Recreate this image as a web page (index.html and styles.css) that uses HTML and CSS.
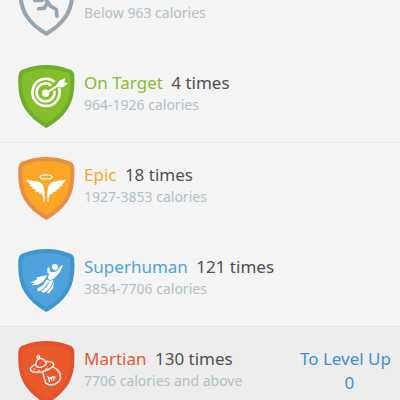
FILE: index.html
```html
<!DOCTYPE html>
<html lang="en">

<head>
    <meta charset="UTF-8">
    <meta name="viewport" content="width=device-width, initial-scale=1.0">
    <title>Calorie Levels</title>
    <link rel="stylesheet" href="styles.css">
</head>

<body>
    <ul class="levels">
        <li class="level below">
            <svg class="badge" viewBox="24 20 171 190" aria-hidden="true">
                <path class="shield" d="M109 26C80 26 56 33 40 39Q32 42 31 50C28 90 31 119 47 146C64 173 87 191 109 203C131 191 154 173 171 146C187 119 190 90 187 50Q186 42 178 39C162 33 138 26 109 26Z" />
                <circle cx="133" cy="64" r="9" fill="#94a5b1" />
                <path d="M84 82L98 76L115 80L109 102L122 120L139 130L141 150M113 108L103 126L86 128M96 103H74M120 84L130 94H142" fill="none" stroke="#94a5b1" stroke-width="11" stroke-linejoin="round" stroke-linecap="round" />
            </svg>
            <div class="info">
                <p class="range">Below 963 calories</p>
            </div>
        </li>
        <li class="level target">
            <svg class="badge" viewBox="24 20 171 190" aria-hidden="true">
                <path class="shield" d="M109 26C80 26 56 33 40 39Q32 42 31 50C28 90 31 119 47 146C64 173 87 191 109 203C131 191 154 173 171 146C187 119 190 90 187 50Q186 42 178 39C162 33 138 26 109 26Z" />
                <path d="M134 71A41 41 0 1 0 147 90M124 82A27 27 0 1 0 133 97" fill="none" stroke="#fff" stroke-width="8" />
                <path d="M107 105L151 78" stroke="#84bf2b" stroke-width="14" />
                <circle cx="107" cy="105" r="11" fill="#fff" />
                <path d="M107 105L153 77" stroke="#fff" stroke-width="6" />
                <path d="M138 82L149 67L166 60L163 72L175 75L159 87L143 88Z" fill="#fff" />
            </svg>
            <div class="info">
                <p class="title"><span class="name">On Target</span> <span>4 times</span></p>
                <p class="range">964-1926 calories</p>
            </div>
        </li>
        <li class="level epic">
            <svg class="badge" viewBox="24 20 171 190" aria-hidden="true">
                <path class="shield" d="M109 26C80 26 56 33 40 39Q32 42 31 50C28 90 31 119 47 146C64 173 87 191 109 203C131 191 154 173 171 146C187 119 190 90 187 50Q186 42 178 39C162 33 138 26 109 26Z" />
                <ellipse cx="108" cy="80" rx="18" ry="6" fill="none" stroke="#fff" stroke-width="4" />
                <g fill="#fff">
                    <path d="M48 87C60 92 76 91 87 95C100 100 105 112 104 154L100 156C101 145 99 137 95 132L86 130L88 126L75 123L78 119L65 115L69 111L57 106L61 102C54 98 50 93 48 87Z" />
                    <path d="M168 87C156 92 140 91 129 95C116 100 111 112 112 154L116 156C115 145 117 137 121 132L130 130L128 126L141 123L138 119L151 115L147 111L159 106L155 102C162 98 166 93 168 87Z" />
                </g>
            </svg>
            <div class="info">
                <p class="title"><span class="name">Epic</span> <span>18 times</span></p>
                <p class="range">1927-3853 calories</p>
            </div>
        </li>
        <li class="level superhuman">
            <svg class="badge" viewBox="24 20 171 190" aria-hidden="true">
                <path class="shield" d="M109 26C80 26 56 33 40 39Q32 42 31 50C28 90 31 119 47 146C64 173 87 191 109 203C131 191 154 173 171 146C187 119 190 90 187 50Q186 42 178 39C162 33 138 26 109 26Z" />
                <circle cx="135" cy="74" r="9" fill="#fff" />
                <path d="M112 77L117 75L120 80L119 88L129 90L141 86L154 69L159 71L150 89L140 101L131 110L120 114L113 107L118 96L112 90Z" fill="#fff" />
                <path d="M112 99L95 102L77 107L84 110L61 122L73 123L65 129L84 128L100 118Z" fill="#fff" />
                <path d="M110 112L98 130L83 138L82 146L91 147L104 135L119 116Z" fill="#fff" />
                <path d="M120 116L111 132L94 148L98 152L108 150L122 134L130 114Z" fill="#fff" />
                <path d="M132 118L130 137L116 154L111 151L125 134Z" fill="#fff" />
            </svg>
            <div class="info">
                <p class="title"><span class="name">Superhuman</span> <span>121 times</span></p>
                <p class="range">3854-7706 calories</p>
            </div>
        </li>
        <li class="level martian">
            <svg class="badge" viewBox="24 20 171 190" aria-hidden="true">
                <path class="shield" d="M109 26C80 26 56 33 40 39Q32 42 31 50C28 90 31 119 47 146C64 173 87 191 109 203C131 191 154 173 171 146C187 119 190 90 187 50Q186 42 178 39C162 33 138 26 109 26Z" />
                <g fill="none" stroke="#fff" stroke-width="4" stroke-linejoin="round" stroke-linecap="round">
                    <path d="M98 114L107 147C122 158 144 151 152 133C153 119 144 106 130 99" />
                    <ellipse class="saucer" cx="96" cy="98" rx="36" ry="14" transform="rotate(-14 96 98)" />
                    <path class="saucer" d="M79 97C76 82 79 76 88 74C99 71 106 78 109 90C102 99 87 102 79 97Z" />
                    <circle cx="85" cy="68" r="4" />
                    <path d="M113 127L117 133L130 128L136 130M117 133L118 143M130 129L132 138M123 132L125 138" />
                </g>
                <path d="M70 104L75 106M83 109L90 109M106 105L113 101" stroke="#fff" stroke-width="3" />
            </svg>
            <div class="info">
                <p class="title"><span class="name">Martian</span> <span>130 times</span></p>
                <p class="range">7706 calories and above</p>
            </div>
            <div class="next">
                <p>To Level Up</p>
                <p class="count">0</p>
            </div>
        </li>
    </ul>
</body>

</html>
```

FILE: styles.css
```css
* {
    box-sizing: border-box;
}

body {
    margin: 0;
    height: 100vh;
    overflow: hidden;
    background-color: #f4f4f4;
    font-family: "Noto Sans", "Open Sans", sans-serif;
    color: #505050;
}

p {
    margin: 0;
}

/* the list is scrolled part way into its first row */
.levels {
    list-style: none;
    margin: -42px 0 0;
    padding: 0;
}

.level {
    display: flex;
    align-items: flex-start;
    gap: 9px;
    height: 92px;
    padding: 15px 9px 0 18px;
}

.badge {
    flex: none;
    width: 57px;
    height: 63px;
}

.shield {
    stroke-width: 12;
}

.info {
    flex: 1;
    padding-top: 6px;
    white-space: nowrap;
}

.below .info {
    padding-top: 30px;
}

.title {
    font-size: 17px;
    line-height: 24px;
}

.name {
    margin-right: 4px;
}

.range {
    font-size: 14px;
    line-height: 20px;
    color: #b3bfc7;
}

.next {
    padding-top: 6px;
    font-size: 17px;
    line-height: 24px;
    text-align: center;
    white-space: nowrap;
    color: #3f8fd0;
}

.count {
    padding-left: 8px;
}

.below .shield {
    fill: #f4f4f4;
    stroke: #94a5b1;
}

.target .name {
    color: #84bf2b;
}

.target .shield {
    fill: #84bf2b;
    stroke: #70ad2d;
}

.epic {
    box-shadow: inset 0 1px #e8e8e8;
}

.epic .name {
    color: #fba627;
}

.epic .shield {
    fill: #fba627;
    stroke: #e88f46;
}

.superhuman .name {
    color: #50a2dc;
}

.superhuman .shield {
    fill: #50a2dc;
    stroke: #3f95d0;
}

.martian {
    background-color: #ededed;
    box-shadow: inset 0 1px #e4e4e4;
}

.martian .name {
    color: #e35a2e;
}

.martian .shield {
    fill: #e85a2c;
    stroke: #e2532b;
}

.saucer {
    fill: #e85a2c;
}
```
